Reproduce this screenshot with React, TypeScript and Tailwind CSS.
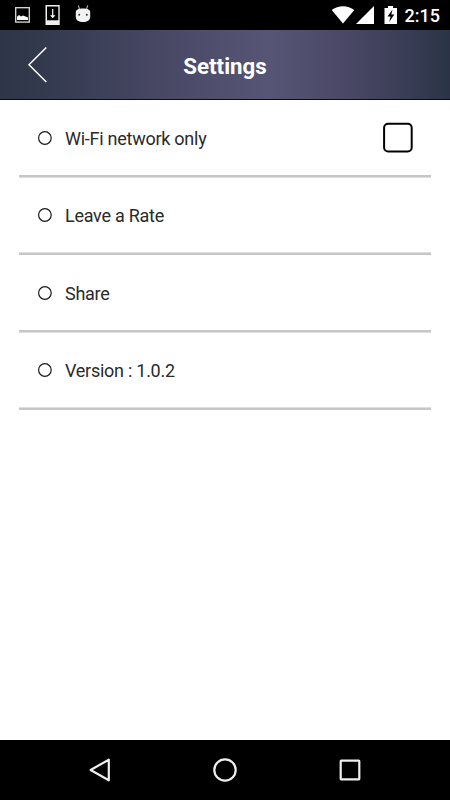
export default function App() {
  return (
    <div className="flex h-[800px] w-[450px] flex-col overflow-hidden bg-white font-[Roboto,sans-serif]">
      <StatusBar />
      <Header />
      <main className="flex-1">
        <ul>
          {settings.map(item => (
            <li key={item.label} className={`flex flex-col px-[19px] ${item.height}`}>
              <div className="flex flex-1 items-center px-[18px]">
                <svg className="size-4 shrink-0" viewBox="0 0 16 16" fill="none">
                  <circle cx="7.9" cy="8" r="6.3" stroke="#1a1a1a" strokeWidth="1.2" />
                </svg>
                <span className="ml-3 flex-1 pt-[2px] text-[18px] leading-6 tracking-[-0.26px] text-[#2a2a2a]">
                  {item.label}
                </span>
                {item.checkbox && (
                  <svg className="size-8" viewBox="0 0 32 32" fill="none">
                    <rect
                      x="3.1"
                      y="1.8"
                      width="27.6"
                      height="27.6"
                      rx="4"
                      stroke="#000"
                      strokeWidth="2"
                    />
                  </svg>
                )}
              </div>
              <div className={`h-[3px] border-[#dedede] bg-[#c6c6c6] ${item.edge}`} />
            </li>
          ))}
        </ul>
      </main>
      <NavigationBar />
    </div>
  )
}

function StatusBar() {
  return (
    <div className="flex h-[30px] items-center bg-black text-white">
      <svg className="h-[30px] w-[100px]" viewBox="0 0 100 30" fill="none">
        <rect x="15.7" y="7.7" width="13.6" height="14.4" stroke="#ddd" strokeWidth="1.3" />
        <path d="M17 20v-3.2l2-1.8 2 1.4 2-1 2.5 1.2 2.5.8V20z" fill="#fff" />
        <path d="M45.5 5h14.2v20H45.5z" fill="#eee" />
        <path d="M47 6.5h11.3v13.8H47z" fill="#000" />
        <path d="M52.7 9v8" stroke="#fff" strokeWidth="1.2" />
        <path d="M50 15.3h5.4l-2.7 2.9z" fill="#fff" />
        <path d="M78.3 5.3l1.2 4M87.7 5.3l-1.2 4" stroke="#aaa" strokeWidth="1.2" />
        <path
          d="M75.8 12c0-2.400 2.600-3.600 7.200-3.600s7.200 1.200 7.200 3.600v4.800c0 3.600-3 5.200-7.200 5.200s-7.200-1.600-7.200-5.200z"
          fill="#f2f2f2"
        />
        <circle cx="79.2" cy="14.8" r="1" fill="#333" />
        <circle cx="86.8" cy="14.8" r="1" fill="#333" />
      </svg>
      <svg className="ml-auto h-[30px] w-[70px]" viewBox="330 0 70 30">
        <path d="M331.7 10.1C338 4.800 348 4.800 354.300 10.100L343 23.600z" fill="#fff" />
        <path d="M374 6v18h-18z" fill="#fff" />
        <path d="M384.5 8h3.500V6h5v2h4v16h-12.500z" fill="#fff" />
        <path d="M392.5 9.500l-5 7h3l-1.300 5.500 5.100-7.500h-3z" fill="#000" />
      </svg>
      <span className="mr-[10px] ml-[5px] pt-px text-[18px] leading-[30px] font-medium">2:15</span>
    </div>
  )
}

function Header() {
  return (
    <header className="grid h-[70px] grid-cols-[75px_1fr_75px] items-center border-b border-[#080838] bg-[linear-gradient(90deg,#2d3547_0%,#353b50_12%,#41435d_27%,#4c4b69_42%,#575575_60%,#4a4866_76%,#3e405a_87%,#2b3446_100%)]">
      <svg className="h-[69px] w-[75px]" viewBox="0 0 75 69" fill="none">
        <path d="M46.3 17.5L29 34.7l17.3 17.3" stroke="#fff" strokeWidth="1.5" />
      </svg>
      <h1 className="pt-[3px] text-center text-[22.3px] leading-[27px] font-bold text-white">
        Settings
      </h1>
    </header>
  )
}

function NavigationBar() {
  return (
    <nav className="flex h-[60px] items-center justify-center gap-[101px] bg-black">
      {navIcons.map(icon => (
        <svg
          key={icon.key}
          className="size-6"
          viewBox="0 0 24 24"
          fill="none"
          stroke="#eee"
          strokeWidth="2.2"
          strokeLinejoin="round"
        >
          {icon.shape}
        </svg>
      ))}
    </nav>
  )
}

const settings = [
  { label: 'Wi-Fi network only', height: 'h-[78px]', edge: 'border-b', checkbox: true },
  { label: 'Leave a Rate', height: 'h-[77px]', edge: 'border-t' },
  { label: 'Share', height: 'h-[78px]', edge: 'border-b' },
  { label: 'Version : 1.0.2', height: 'h-[77px]', edge: 'border-t' }
]

const navIcons = [
  { key: 'back', shape: <path d="M20.8 1.700v20.600L2.600 12z" /> },
  { key: 'home', shape: <circle cx="12" cy="12" r="10.7" /> },
  { key: 'recent', shape: <rect x="2.7" y="2.7" width="18.6" height="18.6" rx="0.5" /> }
]
